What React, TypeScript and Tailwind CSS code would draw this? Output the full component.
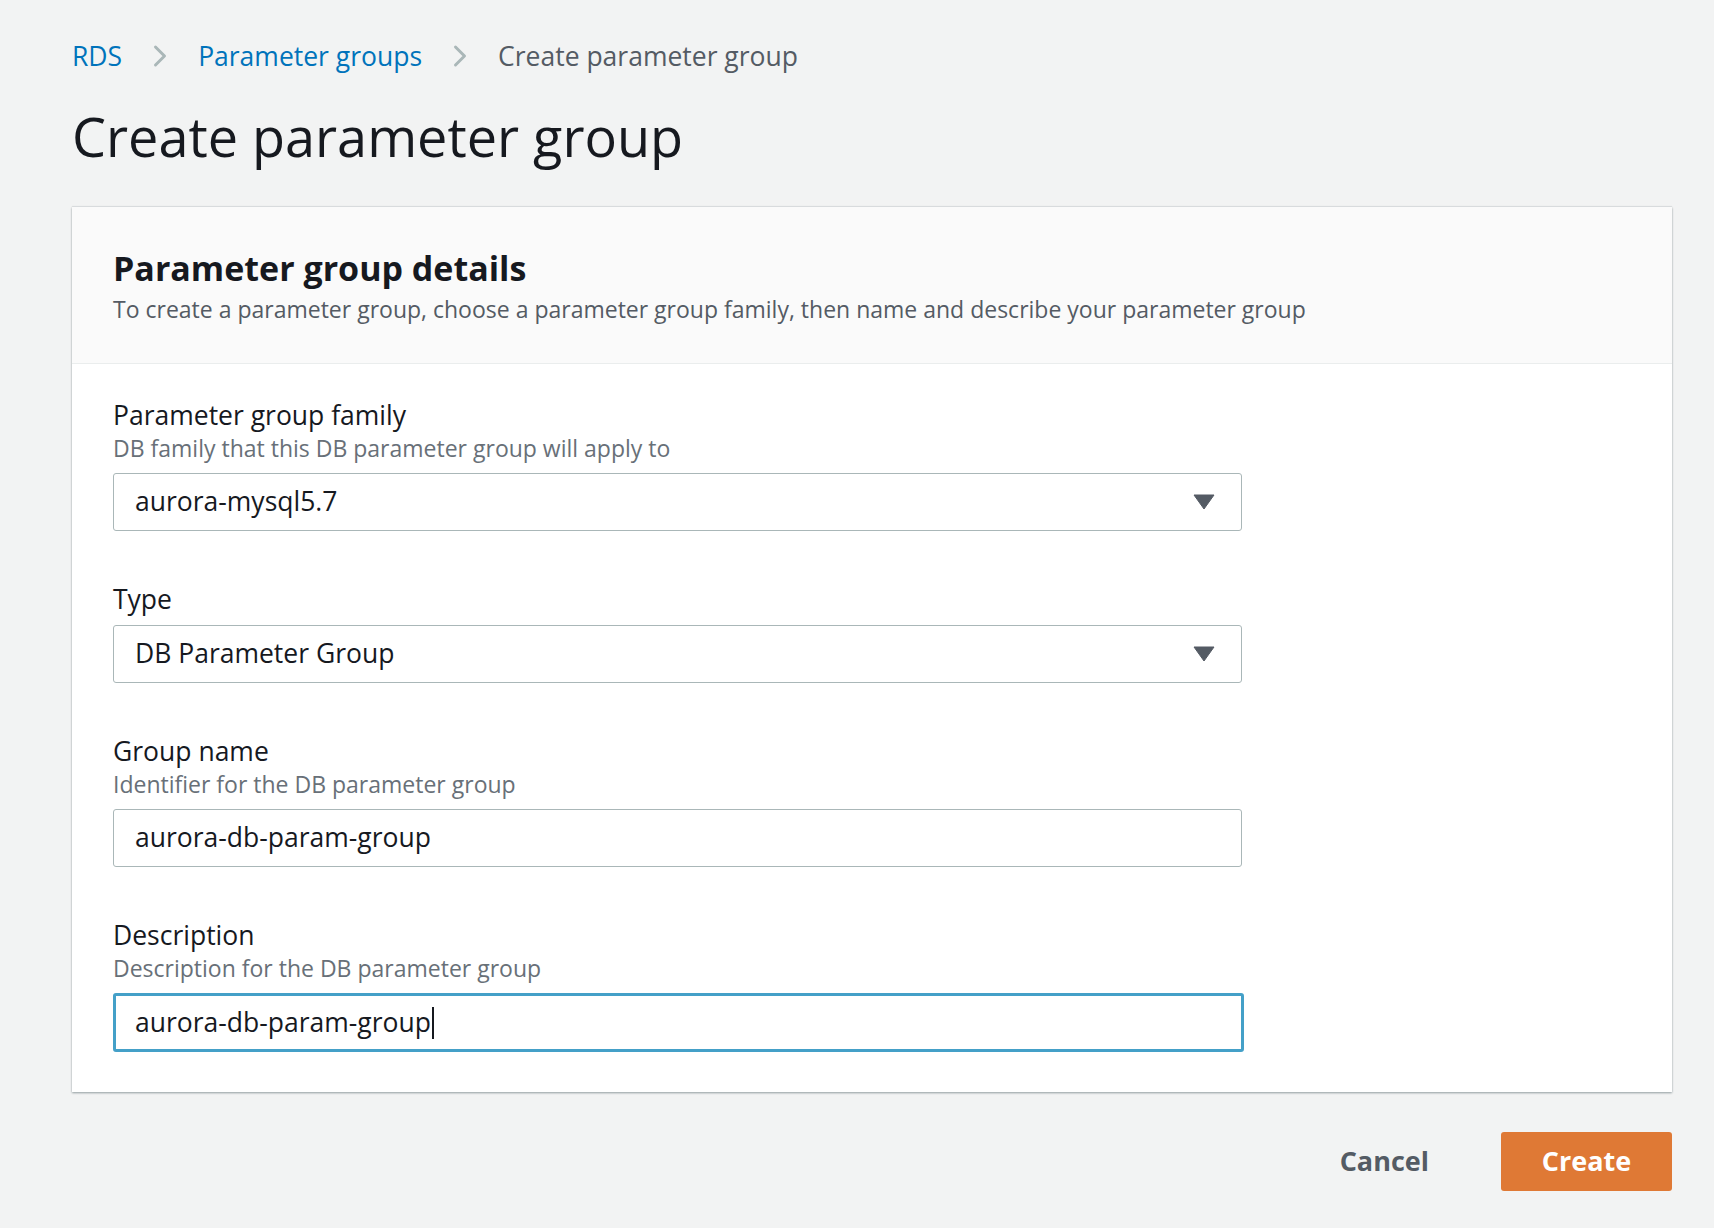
import { ChevronRight } from "lucide-react";

const font = { fontFamily: '"Open Sans", "Noto Sans", sans-serif' };

function Caret() {
  return (
    <svg width="22" height="16" viewBox="0 0 22 16" className="shrink-0">
      <path d="M1 1h20l-10 14z" fill="#545b64" stroke="#545b64" strokeLinejoin="round" />
    </svg>
  );
}

function Field({ label, hint, children, className = "" }: { label: string; hint?: string; children: React.ReactNode; className?: string }) {
  return (
    <div className={className}>
      <div className="text-[26.5px] leading-[34px] text-[#16191f]">{label}</div>
      {hint && <div className="text-[23px] leading-[32px] text-[#687078]">{hint}</div>}
      <div className="mt-[9px]">{children}</div>
    </div>
  );
}

function SelectBox({ value }: { value: string }) {
  return (
    <div className="flex h-[58px] w-[1129px] items-center justify-between rounded-[3px] border border-[#aab7b8] bg-white pl-[21px] pr-[26px]">
      <span className="text-[26.5px] text-[#16191f]">{value}</span>
      <Caret />
    </div>
  );
}

export default function App() {
  return (
    <div className="min-h-[1228px] bg-[#f2f3f3] px-[72px] pt-[36px]" style={font}>
      <nav className="flex items-center gap-[20px] text-[26.5px] leading-[40px]">
        <span className="text-[#0073bb]">RDS</span>
        <ChevronRight size={36} strokeWidth={2} className="text-[#aab7b8]" />
        <span className="text-[#0073bb]">Parameter groups</span>
        <ChevronRight size={36} strokeWidth={2} className="text-[#aab7b8]" />
        <span className="text-[#545b64]">Create parameter group</span>
      </nav>
      <h1 className="mt-[30px] text-[54px] leading-[60px] text-[#16191f]">Create parameter group</h1>

      <div className="mt-[41px] w-[1600px] bg-white shadow-[0_1px_2px_rgba(0,28,36,0.4),0_-1px_1px_rgba(0,28,36,0.08)]">
        <div className="border-b border-[#eaeded] bg-[#fafafa] px-[41px] pt-[40px] pb-[38px]">
          <h2 className="text-[34px] font-bold leading-[42px] text-[#16191f]">Parameter group details</h2>
          <p className="mt-[4px] text-[23px] leading-[32px] text-[#545b64]">
            To create a parameter group, choose a parameter group family, then name and describe your parameter group
          </p>
        </div>
        <div className="px-[41px] pt-[34px] pb-[40px]">
          <Field label="Parameter group family" hint="DB family that this DB parameter group will apply to">
            <SelectBox value="aurora-mysql5.7" />
          </Field>
          <Field label="Type" className="mt-[51px]">
            <SelectBox value="DB Parameter Group" />
          </Field>
          <Field label="Group name" hint="Identifier for the DB parameter group" className="mt-[51px]">
            <div className="flex h-[58px] w-[1129px] items-center rounded-[3px] border border-[#aab7b8] bg-white px-[21px] text-[26.5px] text-[#16191f]">
              aurora-db-param-group
            </div>
          </Field>
          <Field label="Description" hint="Description for the DB parameter group" className="mt-[51px]">
            <div className="flex h-[59px] w-[1131px] items-center rounded-[3px] border-[3px] border-[#44a0c8] bg-white px-[19px] text-[26.5px] text-[#16191f]">
              aurora-db-param-group<span className="ml-[1px] inline-block h-[32px] w-[2px] bg-[#16191f]" />
            </div>
          </Field>
        </div>
      </div>

      <div className="mt-[40px] flex w-[1600px] items-center justify-end gap-[48px]">
        <button className="px-[24px] text-[27px] font-bold text-[#545b64]">Cancel</button>
        <button className="h-[59px] w-[171px] rounded-[3px] bg-[#df7935] text-[27px] font-bold text-white">Create</button>
      </div>
    </div>
  );
}
